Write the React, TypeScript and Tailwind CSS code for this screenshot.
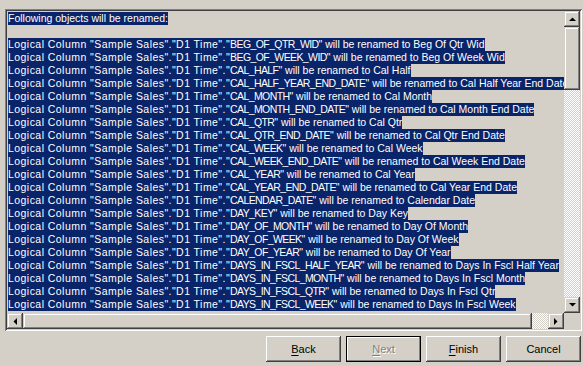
import React from "react";

const items: [string, string][] = [
  ["BEG_OF_QTR_WID", "Beg Of Qtr Wid"],
  ["BEG_OF_WEEK_WID", "Beg Of Week Wid"],
  ["CAL_HALF", "Cal Half"],
  ["CAL_HALF_YEAR_END_DATE", "Cal Half Year End Date"],
  ["CAL_MONTH", "Cal Month"],
  ["CAL_MONTH_END_DATE", "Cal Month End Date"],
  ["CAL_QTR", "Cal Qtr"],
  ["CAL_QTR_END_DATE", "Cal Qtr End Date"],
  ["CAL_WEEK", "Cal Week"],
  ["CAL_WEEK_END_DATE", "Cal Week End Date"],
  ["CAL_YEAR", "Cal Year"],
  ["CAL_YEAR_END_DATE", "Cal Year End Date"],
  ["CALENDAR_DATE", "Calendar Date"],
  ["DAY_KEY", "Day Key"],
  ["DAY_OF_MONTH", "Day Of Month"],
  ["DAY_OF_WEEK", "Day Of Week"],
  ["DAY_OF_YEAR", "Day Of Year"],
  ["DAYS_IN_FSCL_HALF_YEAR", "Days In Fscl Half Year"],
  ["DAYS_IN_FSCL_MONTH", "Days In Fscl Month"],
  ["DAYS_IN_FSCL_QTR", "Days In Fscl Qtr"],
  ["DAYS_IN_FSCL_WEEK", "Days In Fscl Week"],
];

const raisedSb =
  "bg-[#d4d0c8] shadow-[inset_-1px_-1px_#404040,inset_1px_1px_#d4d0c8,inset_-2px_-2px_#808080,inset_2px_2px_#ffffff]";
const checker =
  "bg-[image:repeating-conic-gradient(#d4d0c8_0%_25%,#ffffff_0%_50%)] bg-[length:2px_2px]";

function Arrow({ dir }: { dir: "up" | "down" | "left" | "right" }) {
  const pts: Record<string, string> = {
    up: "0,4 7,4 3.5,0.5",
    down: "0,0 7,0 3.5,3.5",
    left: "4,0 4,7 0.5,3.5",
    right: "0,0 0,7 3.5,3.5",
  };
  const horiz = dir === "left" || dir === "right";
  return (
    <svg width={horiz ? 4 : 7} height={horiz ? 7 : 4} viewBox={horiz ? "0 0 4 7" : "0 0 7 4"}>
      <polygon points={pts[dir]} fill="#000" />
    </svg>
  );
}

function SbButton({ dir }: { dir: "up" | "down" | "left" | "right" }) {
  return (
    <div className={`w-[16px] h-[16px] shrink-0 flex items-center justify-center ${raisedSb}`}>
      <Arrow dir={dir} />
    </div>
  );
}

function Button({ u, rest, disabled, def }: { u: string; rest: string; disabled?: boolean; def?: boolean }) {
  return (
    <div className={`w-[75px] h-[26px] text-[11px] ${def ? "border border-black" : ""}`}>
      <div
        className={`w-full h-full flex items-center justify-center bg-[#d4d0c8] ${
          def
            ? "shadow-[inset_-1px_-1px_#808080,inset_1px_1px_#ffffff]"
            : "shadow-[inset_-1px_-1px_#404040,inset_1px_1px_#ffffff,inset_-2px_-2px_#808080]"
        }`}
      >
        <span className={disabled ? "text-[#808080] [text-shadow:1px_1px_0_#ffffff]" : "text-black"}>
          <span className="underline underline-offset-[2px]">{u}</span>
          {rest}
        </span>
      </div>
    </div>
  );
}

export default function App() {
  return (
    <div
      className="w-[583px] h-[366px] bg-[#d4d0c8] overflow-hidden pt-[9px] pl-[5px]"
      style={{ fontFamily: '"Liberation Sans", Arial, sans-serif' }}
    >
      <div className="w-[577px] h-[322px] p-[2px] shadow-[inset_1px_1px_#808080,inset_-1px_-1px_#ffffff,inset_2px_2px_#404040,inset_-2px_-2px_#d4d0c8]">
        <div className="flex flex-col w-full h-full">
          <div className="flex flex-1 min-h-0">
            <div className="flex-1 min-w-0 overflow-hidden pl-[1px] pt-[1px] text-[10.5px] leading-[13px] whitespace-pre">
              <div className="h-[13px]">
                <span className="inline-block h-[13px] bg-[#0a246a] text-white">Following objects will be renamed:</span>
              </div>
              <div className="h-[13px]" />
              {items.map(([col, name]) => (
                <div key={col} className="h-[13px]">
                  <span className="inline-block h-[13px] bg-[#0a246a] text-white">
                    <span className="tracking-[0.45px]">{`Logical Column "Sample Sales"."D1 Time"."`}</span>
                    <span className="tracking-[-0.6px]">{col}</span>
                    <span>{`" will be renamed to ${name}`}</span>
                  </span>
                </div>
              ))}
            </div>
            <div className="w-[16px] flex flex-col shrink-0">
              <SbButton dir="up" />
              <div className={`h-[63px] shrink-0 ${raisedSb}`} />
              <div className={`flex-1 ${checker}`} />
              <SbButton dir="down" />
            </div>
          </div>
          <div className="flex h-[16px] shrink-0">
            <SbButton dir="left" />
            <div className={`w-[509px] shrink-0 ${raisedSb}`} />
            <div className={`flex-1 ${checker}`} />
            <SbButton dir="right" />
            <div className="w-[16px] shrink-0 bg-[#d4d0c8]" />
          </div>
        </div>
      </div>
      <div className="flex justify-end gap-[5px] mt-[5px] pr-[2px] -ml-[5px]">
        <Button u="B" rest="ack" />
        <Button u="N" rest="ext" disabled def />
        <Button u="F" rest="inish" />
        <Button u="" rest="Cancel" />
      </div>
    </div>
  );
}
